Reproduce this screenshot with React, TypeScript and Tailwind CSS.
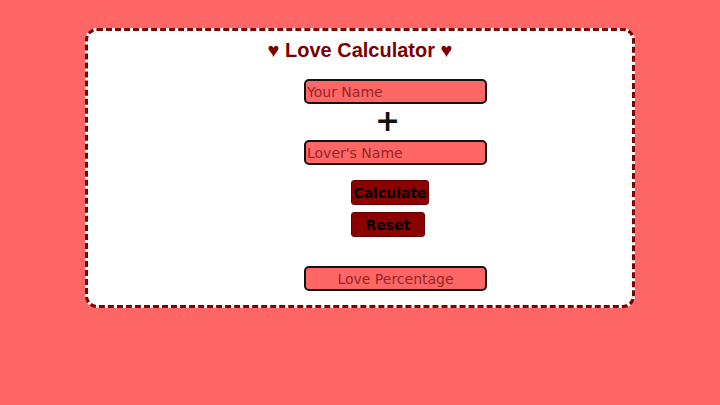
import React from "react";

export default function App() {
  return (
    <div className="w-[720px] h-[405px] bg-[#ff6666] pt-[28px]" style={{ fontFamily: "'DejaVu Sans', sans-serif" }}>
      <div className="mx-auto w-[550px] h-[280px] bg-white border-[3px] border-dashed border-[#800000] rounded-[12px] relative">
        <h1 className="text-center text-[20px] font-bold text-[#7a0000] mt-[7px] leading-[24px]" style={{ fontFamily: "'Liberation Sans', Arial, sans-serif" }}>
          ♥ Love Calculator ♥
        </h1>
        <div className="flex flex-col items-start ml-[216px] mt-[17px]">
          <input
            placeholder="Your Name"
            className="w-[183px] h-[25px] border-2 border-[#111] rounded-[5px] bg-[#ff6666] pl-[1px] text-[14px] text-[#7a0000] placeholder:text-[#932626] outline-none"
          />
          <div className="ml-[71px] mt-[2px] h-[32px] text-[30px] font-semibold leading-[30px] text-[#111]">+</div>
          <input
            placeholder="Lover's Name"
            className="w-[183px] h-[25px] border-2 border-[#111] rounded-[5px] bg-[#ff6666] pl-[1px] text-[14px] text-[#7a0000] placeholder:text-[#932626] outline-none mt-[2px]"
          />
          <button className="ml-[47px] mt-[15px] w-[78px] h-[25px] bg-[#8b0000] border border-[#6a0000] rounded-[3px] text-[14px] font-bold text-black leading-none">
            Calculate
          </button>
          <button className="ml-[47px] mt-[7px] w-[74px] h-[25px] bg-[#8b0000] border border-[#6a0000] rounded-[3px] text-[14px] font-bold text-black leading-none">
            Reset
          </button>
          <input
            placeholder="Love Percentage"
            readOnly
            className="w-[183px] h-[25px] border-2 border-[#111] rounded-[5px] bg-[#ff6666] text-center text-[14px] text-[#7a0000] placeholder:text-[#932626] outline-none mt-[29px]"
          />
        </div>
      </div>
    </div>
  );
}
